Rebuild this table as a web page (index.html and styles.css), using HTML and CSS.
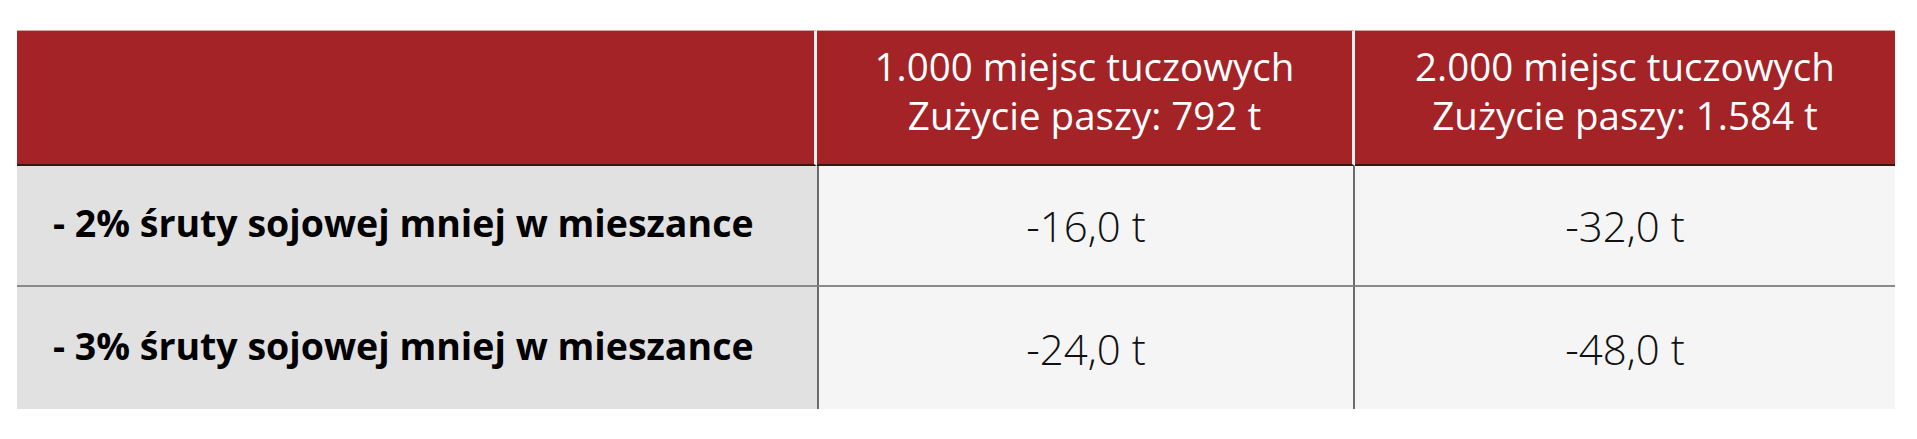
FILE: index.html
```html
<!DOCTYPE html>
<html lang="pl">
<head>
<meta charset="utf-8">
<title>Tabela</title>
<link rel="stylesheet" href="styles.css">
</head>
<body>
<div class="page">
  <div class="table">
    <div class="cell head first"></div>
    <div class="cell head mid">1.000 miejsc tuczowych<br>Zużycie paszy: 792 t</div>
    <div class="cell head last">2.000 miejsc tuczowych<br>Zużycie paszy: 1.584 t</div>

    <div class="cell label r1">- 2% śruty sojowej mniej w mieszance</div>
    <div class="cell val mid r1">-16,0 t</div>
    <div class="cell val last r1">-32,0 t</div>

    <div class="cell label">- 3% śruty sojowej mniej w mieszance</div>
    <div class="cell val mid">-24,0 t</div>
    <div class="cell val last">-48,0 t</div>
  </div>
</div>
</body>
</html>
```

FILE: styles.css
```css
* { box-sizing: border-box; }
html, body { margin: 0; padding: 0; background: #ffffff; }
.page {
  padding: 30px 0 0 17px;
  font-family: "Open Sans", "Noto Sans", sans-serif;
}
.table {
  display: grid;
  grid-template-columns: 800px 538px 540px;
  grid-template-rows: 136px 121px 122px;
  width: 1878px;
}
.cell {
  display: flex;
  align-items: center;
  justify-content: center;
  text-align: center;
}
.head {
  background: #a32326;
  color: #ffffff;
  font-size: 38.5px;
  line-height: 49px;
  font-weight: 400;
  border-bottom: 2px solid #3d1416;
  padding-bottom: 14px;
  border-top: 1px solid #d9a3a4;
}
.head.first, .head.mid { border-right: 3px solid #fbeeee; }
.label {
  background: #e1e1e1;
  justify-content: flex-start;
  padding-left: 36px;
  font-size: 37.5px;
  font-weight: 700;
  color: #000000;
  padding-bottom: 6px;
}
.val {
  background: #f5f5f5;
  font-size: 42px;
  font-weight: 300;
  color: #111111;
  padding-bottom: 0;
}
.val.mid { border-left: 2px solid #6b6b6b; border-right: 2px solid #6b6b6b; }
.label.r1, .val.r1 { border-bottom: 2px solid #8a8a8a; }
```
